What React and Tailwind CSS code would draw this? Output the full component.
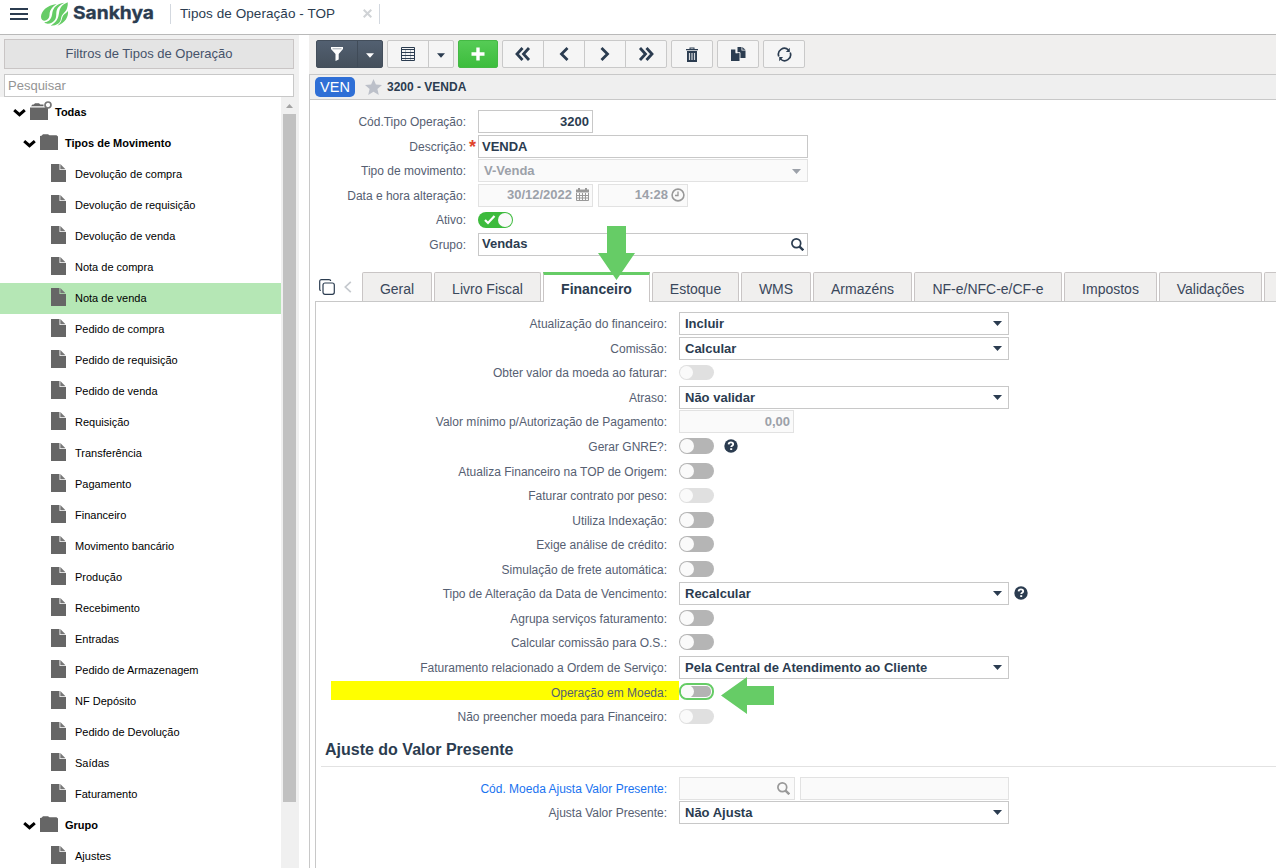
import React from 'react';

const movimentos = [
  'Devolução de compra',
  'Devolução de requisição',
  'Devolução de venda',
  'Nota de compra',
  'Nota de venda',
  'Pedido de compra',
  'Pedido de requisição',
  'Pedido de venda',
  'Requisição',
  'Transferência',
  'Pagamento',
  'Financeiro',
  'Movimento bancário',
  'Produção',
  'Recebimento',
  'Entradas',
  'Pedido de Armazenagem',
  'NF Depósito',
  'Pedido de Devolução',
  'Saídas',
  'Faturamento'
];

const tabs = [
  { nome: 'Geral', width: 'w-[70px]' },
  { nome: 'Livro Fiscal', width: 'w-[107px]' },
  { nome: 'Financeiro', width: 'w-[107px]', ativo: true },
  { nome: 'Estoque', width: 'w-[87px]' },
  { nome: 'WMS', width: 'w-[70px]' },
  { nome: 'Armazéns', width: 'w-[99px]' },
  { nome: 'NF-e/NFC-e/CF-e', width: 'w-[148px]' },
  { nome: 'Impostos', width: 'w-[93px]' },
  { nome: 'Validações', width: 'w-[103px]' },
  { nome: '', width: 'w-[60px]' }
];

const campos = [
  { label: 'Atualização do financeiro:', tipo: 'select', valor: 'Incluir' },
  { label: 'Comissão:', tipo: 'select', valor: 'Calcular' },
  { label: 'Obter valor da moeda ao faturar:', tipo: 'toggle', disabled: true },
  { label: 'Atraso:', tipo: 'select', valor: 'Não validar' },
  { label: 'Valor mínimo p/Autorização de Pagamento:', tipo: 'numero', valor: '0,00' },
  { label: 'Gerar GNRE?:', tipo: 'toggle', ajuda: true },
  { label: 'Atualiza Financeiro na TOP de Origem:', tipo: 'toggle' },
  { label: 'Faturar contrato por peso:', tipo: 'toggle', disabled: true },
  { label: 'Utiliza Indexação:', tipo: 'toggle' },
  { label: 'Exige análise de crédito:', tipo: 'toggle' },
  { label: 'Simulação de frete automática:', tipo: 'toggle' },
  { label: 'Tipo de Alteração da Data de Vencimento:', tipo: 'select', valor: 'Recalcular', ajuda: true },
  { label: 'Agrupa serviços faturamento:', tipo: 'toggle' },
  { label: 'Calcular comissão para O.S.:', tipo: 'toggle' },
  { label: 'Faturamento relacionado a Ordem de Serviço:', tipo: 'select', valor: 'Pela Central de Atendimento ao Cliente' },
  { label: 'Operação em Moeda:', tipo: 'toggle', foco: true },
  { label: 'Não preencher moeda para Financeiro:', tipo: 'toggle', disabled: true }
];

function Caret({ className = '' }) {
  return (
    <svg width="9" height="5" viewBox="0 0 9 5" className={className}>
      <path d="M0 0h9L4.5 5z" fill="currentColor" />
    </svg>
  );
}

function Lupa({ className = '' }) {
  return (
    <svg width="13" height="13" viewBox="0 0 13 13" fill="none" stroke="currentColor" className={className}>
      <circle cx="5.3" cy="5.3" r="4.4" strokeWidth="1.7" />
      <path d="M8.3 8.3l4 4" strokeWidth="2.4" />
    </svg>
  );
}

function Ajuda({ className = '' }) {
  return (
    <svg width="14" height="14" viewBox="0 0 14 14" className={className}>
      <circle cx="7" cy="7" r="6.7" fill="#2b3c50" />
      <path d="M4.6 5.4c.1-1.4 1.1-2 2.3-2 1.300 0 2.300.7 2.300 1.800 0 1.600-2 1.400-2 2.900" fill="none" stroke="#fff" strokeWidth="1.800" />
      <path d="M6.200 9.200h2v1.800h-2z" fill="#fff" />
    </svg>
  );
}

function Seta() {
  return (
    <svg width="13" height="8" viewBox="0 0 13 8" className="shrink-0">
      <path d="M1.200 1.200L6.500 5.700l5.300-4.500" fill="none" stroke="#000" strokeWidth="3" />
    </svg>
  );
}

function Pasta() {
  return (
    <svg width="18" height="16" viewBox="0 0 18 16" className="shrink-0">
      <path d="M0 2l1.500-.3L3 .3h5l1.500 1h7L18 2.600V16H0z" fill="#666" />
    </svg>
  );
}

function PastaRaiz() {
  return (
    <svg width="23" height="19" viewBox="0 0 23 19" className="shrink-0">
      <path d="M0 6.500h18V19H0zM1 5.300l1.500-1.700h1.300L5 2.200h4l1.300 1.400H13.500v1.700z" fill="#666" />
      <circle cx="18" cy="4" r="3" fill="#fff" stroke="#777" strokeWidth="1.700" />
    </svg>
  );
}

function Arquivo() {
  return (
    <svg width="15" height="18" viewBox="0 0 15 18" className="shrink-0">
      <path d="M0 0h8.500v6H15v12H0z" fill="#666" />
      <path d="M9.300 0v5.200H14.500z" fill="#777" />
    </svg>
  );
}

function Toggle({ disabled, foco, ligado }) {
  if (ligado) {
    return (
      <div className="relative mt-[2px] h-4 w-[35px] rounded-full bg-[#3dbb3d]">
        <svg width="12" height="10" viewBox="0 0 12 10" className="absolute left-[6px] top-[3px]">
          <path d="M1 5l3 3 6.500-7" fill="none" stroke="#fff" strokeWidth="2.200" />
        </svg>
        <div className="absolute right-[1px] top-[1px] h-[14px] w-[14px] rounded-full bg-[#fafafa]" />
      </div>
    );
  }
  if (foco) {
    return (
      <div className="mt-[2.6px] h-[17px] w-[35px] rounded-[8px] border-2 border-[#66cc66] bg-white p-px">
        <div className="relative h-[11px] w-[29px] rounded-[5px] bg-[#b3b3b3]">
          <div className="absolute -left-px -top-px h-[13px] w-[13px] rounded-full bg-[#fafafa]" />
        </div>
      </div>
    );
  }
  return (
    <div className={disabled ? 'mt-[3.6px] h-[15px] w-[35px] rounded-full bg-[#e0e0e0] p-px' : 'mt-[3px] h-[16px] w-[35px] rounded-full bg-[#b5b5b5] p-px'}>
      <div className={disabled ? 'h-[13px] w-[13px] rounded-full bg-[#fafafa]' : 'h-[14px] w-[14px] rounded-full bg-[#fafafa]'} />
    </div>
  );
}

function Select({ valor, disabled }) {
  return (
    <div
      className={
        disabled
          ? 'flex h-[23px] w-[330px] items-center justify-between border border-[#e2e2e2] bg-[#fafafa] pl-[5px] pr-[6px] text-[13px] font-bold text-[#9ca1a9]'
          : 'flex h-[23px] w-[330px] items-center justify-between border border-[#c8c8c8] bg-white pl-[5px] pr-[6px] text-[13px] font-bold text-[#2b3c50]'
      }
    >
      <span>{valor}</span>
      <Caret className={disabled ? 'mt-[2px]' : ''} />
    </div>
  );
}

function Linha({ label, labelWidth, children, destaque, link, obrigatorio }) {
  return (
    <div className="flex h-[24.56px] items-start">
      <div className={`${labelWidth} relative h-[23px] shrink-0 pr-3 text-right text-[12px] leading-[24px] ${link ? 'text-[#1a73f0]' : 'text-[#566072]'}`}>
        {destaque && <div className="absolute right-0 top-0 h-[19px] w-[348px] bg-[#ffff00]" />}
        <span className="relative">{label}</span>
        {obrigatorio && <span className="absolute right-[2px] top-0 text-[18px] font-bold text-[#e0442c]">*</span>}
      </div>
      {children}
    </div>
  );
}

function Cabecalho() {
  return (
    <header className="flex h-[35px] shrink-0 items-start border-b border-[#b9b9b9] bg-white">
      <div className="ml-[10px] mt-[8px] flex w-[18px] flex-col gap-[3px]">
        <div className="h-[2px] bg-[#2b3c50]" />
        <div className="h-[2px] bg-[#2b3c50]" />
        <div className="h-[2px] bg-[#2b3c50]" />
      </div>
      <svg width="120" height="28" viewBox="0 0 120 28" className="ml-[12px]">
        <g fill="#66cc66" transform="scale(.3333) translate(-120 0)">
          <path d="M170 12C140 15 123 35 123 50c0 12 12 16 20 8 9-8 3-18 9-28 5-10 11-13 18-18z" />
          <path d="M193 8c-23 4-33 14-36 30-2 17-7 26-24 29 7 9 27 3 33-9 6-13-1-23 9-36 5-7 11-10 18-14z" />
          <path d="M203 7c-16 7-22 15-25 27-3 16-2 28-26 43 20-1 28-7 31-21 2-14 12-18 17-28 3-8 4-14 3-21z" />
          <path d="M204 32c2 18-8 36-32 45 12-9 12-15 15-25 3-10 12-12 17-20z" />
        </g>
        <text x="33" y="19" textLength="81" lengthAdjust="spacingAndGlyphs" fontFamily="Inter, sans-serif" fontWeight="700" fontSize="18" fill="#2b3c50" stroke="#2b3c50" strokeWidth=".3">Sankhya</text>
      </svg>
      <div className="ml-[10px] mt-[4px] h-5 w-px bg-[#d3d8df]" />
      <span className="ml-[9px] mt-[4px] w-[183px] text-[13.5px] leading-[20px] tracking-[0.07px] text-[#2b3c50]">Tipos de Operação - TOP</span>
      <svg width="9" height="9" viewBox="0 0 9 9" className="mt-[9px]">
        <path d="M.7.700l7.600 7.600M8.300.700L.7 8.300" stroke="#d0d3d6" strokeWidth="2" />
      </svg>
      <div className="ml-[7px] mt-[4px] h-5 w-px bg-[#d3d8df]" />
    </header>
  );
}

function Sidebar() {
  return (
    <aside className="flex w-[299px] shrink-0 flex-col bg-[#f0f0f0]">
      <div className="px-1 pr-[5px] pt-[4px]">
        <div className="h-[30px] border border-[#c9c5c5] bg-[#e4e4e4] text-center text-[13px] leading-[28px] text-[#46536a]">
          Filtros de Tipos de Operação
        </div>
        <div className="mt-[5px] h-[23px] border border-[#c8c8c8] bg-white pl-[3px] text-[13px] leading-[21px] text-[#949494]">
          Pesquisar
        </div>
      </div>
      <div className="flex min-h-0 flex-1">
        <div className="w-[281px] shrink-0 overflow-hidden bg-white text-[11px] text-black">
          <div className="flex h-[31px] items-center pl-[13px] font-bold">
            <Seta />
            <div className="-mt-[5px] ml-1"><PastaRaiz /></div>
            <span className="ml-[2px]">Todas</span>
          </div>
          <div className="flex h-[31px] items-center pl-[23px] font-bold">
            <Seta />
            <div className="-mt-[4px] ml-1"><Pasta /></div>
            <span className="ml-[7px]">Tipos de Movimento</span>
          </div>
          {movimentos.map((m) => (
            <div
              key={m}
              className={`flex h-[31px] items-center pl-[51px] ${m === 'Nota de venda' ? 'bg-[#b5e7b5]' : ''}`}
            >
              <div className="-mt-[4px]"><Arquivo /></div>
              <span className="ml-[9px]">{m}</span>
            </div>
          ))}
          <div className="flex h-[31px] items-center pl-[23px] font-bold">
            <Seta />
            <div className="-mt-[4px] ml-1"><Pasta /></div>
            <span className="ml-[7px]">Grupo</span>
          </div>
          <div className="flex h-[31px] items-center pl-[51px]">
            <div className="-mt-[4px]"><Arquivo /></div>
            <span className="ml-[9px]">Ajustes</span>
          </div>
        </div>
        {/* barra de rolagem */}
        <div className="w-[18px] pl-[2px] pt-[7px]">
          <svg width="13" height="4" viewBox="0 0 13 4">
            <path d="M3 4h7L6.500 0z" fill="#a3a3a3" />
          </svg>
          <div className="mt-[6px] h-[688px] w-[13px] bg-[#c1c1c1]" />
        </div>
      </div>
    </aside>
  );
}

function Botao({ children, className = '' }) {
  return (
    <div className={`flex h-7 w-[42px] items-center justify-center rounded-[2px] border border-[#c9c9c9] bg-[#f5f5f5] ${className}`}>
      {children}
    </div>
  );
}

function Navegacao({ d, largura }) {
  return (
    <svg width={largura} height="14" viewBox={`0 0 ${largura} 14`}>
      <path d={d} fill="none" stroke="#2b3c50" strokeWidth="2.800" />
    </svg>
  );
}

function Toolbar() {
  return (
    <div className="flex h-[39px] shrink-0 gap-1 bg-[#f0efee] pl-[7px] pt-[5px] text-[#2b3c50]">
      <div className="flex h-7 w-[67px] rounded-[2px] border border-[#434e5b] bg-linear-to-b from-[#526071] to-[#45505c] text-white">
        <div className="flex w-[41px] items-center justify-center border-r border-[#404b58]">
          <svg width="12" height="14" viewBox="0 0 12 14">
            <path d="M0 0h12v2L7.700 7v5.500L4.500 14V7L0 2z" fill="#fff" />
            <path d="M1.500 1.800h9" stroke="#8a939d" strokeWidth=".8" />
          </svg>
        </div>
        <div className="flex flex-1 items-center justify-center pt-[3px]"><Caret className="w-2" /></div>
      </div>
      <div className="flex h-7 w-[67px] rounded-[2px] border border-[#c9c9c9] bg-[#f5f5f5]">
        <div className="flex w-[41px] items-center justify-center border-r border-[#c9c9c9]">
          <svg width="14" height="14" viewBox="0 0 14 14" fill="none">
            <path d="M4.500 3v10.500M9.500 3v10.500" stroke="#b4bbc2" />
            <path d="M.5.500h13v13H.5zM1 2.500h12M1 5.500h12M1 8.500h12M1 11.500h12" stroke="#2b3c50" />
          </svg>
        </div>
        <div className="flex flex-1 items-center justify-center pt-[3px]"><Caret className="w-2" /></div>
      </div>
      <div className="flex h-7 w-10 items-center justify-center rounded-[2px] border border-[#44b944] bg-linear-to-b from-[#55cb55] to-[#3cbd3c]">
        <svg width="14" height="14" viewBox="0 0 14 14">
          <path d="M7 .5v13M.5 7h13" stroke="#fff" strokeWidth="3.400" />
        </svg>
      </div>
      <div className="flex">
        <Botao className="rounded-r-none"><Navegacao largura={16} d="M7.500 1L2 7l5.500 6M14 1L8.500 7l5.500 6" /></Botao>
        <Botao className="-ml-px rounded-none"><Navegacao largura={12} d="M9.500 1L3.500 7l6 6" /></Botao>
        <Botao className="-ml-px rounded-none"><Navegacao largura={12} d="M2.500 1l6 6-6 6" /></Botao>
        <Botao className="-ml-px rounded-l-none"><Navegacao largura={16} d="M2 1l5.500 6L2 13M8.500 1L14 7l-5.500 6" /></Botao>
      </div>
      <Botao>
        <svg width="12" height="15" viewBox="0 0 12 15">
          <path d="M0 2h3.500V.500h5V2H12v1.200H0zM4.500 1.500V2h3v-.5z" fill="#2b3c50" fillRule="evenodd" />
          <path d="M1 4h10v11H1z" fill="#2b3c50" />
          <path d="M3.500 6v7M6 6v7M8.500 6v7" stroke="#d5d9dd" strokeWidth="1.200" />
        </svg>
      </Botao>
      <Botao>
        <svg width="15" height="14" viewBox="0 0 15 14">
          <path d="M6.500 0h4v3.500h4V11h-8z" fill="#2b3c50" />
          <path d="M11.300 0l3.200 2.800h-3.200z" fill="#2b3c50" />
          <path d="M0 2.500h4.500v3.700H8.500V14H0z" fill="#2b3c50" />
          <path d="M5.200 1.800v3.800H9v5.500" fill="none" stroke="#f5f5f5" strokeWidth=".9" />
        </svg>
      </Botao>
      <Botao>
        <svg width="15" height="15" viewBox="0 0 15 15" fill="none" stroke="#2b3c50" strokeWidth="1.700">
          <path d="M1.800 9.500A6 6 0 0 1 11.500 3M13.200 5.500A6 6 0 0 1 3.500 12" />
          <path d="M12.800.700v4.200H8.900zM2.200 14.300v-4.200h3.900z" fill="#2b3c50" stroke="none" />
        </svg>
      </Botao>
    </div>
  );
}

function Formulario() {
  return (
    <div className="relative pt-[10px]">
      <Linha label="Cód.Tipo Operação:" labelWidth="w-[168px]">
        <div className="h-[23px] w-[115px] border border-[#c8c8c8] pr-[3px] text-right text-[13px] font-bold leading-[21px] text-[#2b3c50]">3200</div>
      </Linha>
      <Linha label="Descrição:" labelWidth="w-[168px]" obrigatorio>
        <div className="h-[23px] w-[330px] border border-[#c8c8c8] pl-[3px] text-[13px] font-bold leading-[21px] text-[#2b3c50]">VENDA</div>
      </Linha>
      <Linha label="Tipo de movimento:" labelWidth="w-[168px]">
        <Select valor="V-Venda" disabled />
      </Linha>
      <Linha label="Data e hora alteração:" labelWidth="w-[168px]">
        <div className="flex h-[23px] w-[115px] items-center justify-end border border-[#e2e2e2] bg-[#fafafa] pr-[3px] text-[13px] font-bold text-[#9ca1a9]">
          30/12/2022
          <svg width="13" height="13" viewBox="0 0 13 13" className="mb-px ml-1">
            <path d="M0 1.500h13v3H0zM2 0h2v2H2zM9 0h2v2H9z" fill="#999" />
            <path d="M.5 5v7.500h12V5M.5 7.500h12M.5 10h12M3.500 5v7.500M6.500 5v7.500M9.500 5v7.500" fill="none" stroke="#999" />
          </svg>
        </div>
        <div className="ml-[5px] flex h-[23px] w-[90px] items-center justify-end border border-[#e2e2e2] bg-[#fafafa] pr-[2px] text-[13px] font-bold text-[#9ca1a9]">
          14:28
          <svg width="14" height="14" viewBox="0 0 14 14" fill="none" stroke="#999" className="ml-[3px]">
            <circle cx="7" cy="7" r="5.900" strokeWidth="1.600" />
            <path d="M7 3.500V7.500H4" strokeWidth="1.300" />
          </svg>
        </div>
      </Linha>
      <Linha label="Ativo:" labelWidth="w-[168px]">
        <div className="pt-[2px]"><Toggle ligado /></div>
      </Linha>
      <Linha label="Grupo:" labelWidth="w-[168px]">
        <div className="flex h-[23px] w-[330px] items-center justify-between border border-[#c8c8c8] pl-[3px] pr-[3px] text-[13px] font-bold text-[#2b3c50]">
          Vendas
          <Lupa />
        </div>
      </Linha>
      {/* seta verde apontando para a aba Financeiro */}
      <svg width="37" height="54" viewBox="0 0 37 54" className="absolute left-[288px] top-[126px] z-20">
        <path d="M9 0h19v27h9L18.500 54 0 27h9z" fill="#66cc66" />
      </svg>
    </div>
  );
}

function Abas() {
  return (
    <div className="mt-[14.64px] flex h-[29px] overflow-hidden">
      <div className="flex w-[52px] shrink-0 items-start pl-[9px] pt-[7px]">
        <svg width="16" height="16" viewBox="0 0 16 16" fill="none" stroke="#2b3c50">
          <rect x="4" y="4" width="11.300" height="11.300" rx="2" strokeWidth="1.200" />
          <path d="M1.800 11.500C1 11.500.7 11 .7 10V2.500C.7 1.300 1.300.700 2.500.700H10c1.200 0 1.700.4 1.700 1.300" strokeWidth="1.200" />
        </svg>
        <svg width="8" height="12" viewBox="0 0 8 12" className="ml-[9px] mt-[2px]">
          <path d="M6.800 .8L1.300 6l5.500 5.200" fill="none" stroke="#c5c9ce" strokeWidth="1.700" />
        </svg>
      </div>
      <div className="flex gap-[2px]">
        {tabs.map((t) => (
          <div
            key={t.nome}
            className={
              t.ativo
                ? `${t.width} shrink-0 border-x border-t-[3px] border-x-[#c9c5c5] border-t-[#66cc66] bg-white text-center text-[14px] font-bold leading-[28px] text-[#2b3c50]`
                : `${t.width} shrink-0 rounded-t-[2px] border border-b-0 border-[#c9c5c5] bg-[#f0efee] text-center text-[14px] leading-[32px] text-[#3a475b]`
            }
          >
            {t.nome}
          </div>
        ))}
      </div>
    </div>
  );
}

function Financeiro() {
  return (
    <div className="relative ml-[5px] flex-1 border-l border-[#c8c8c8]">
      {/* linha superior interrompida sob a aba ativa */}
      <div className="flex h-px">
        <div className="w-[228px] bg-[#c8c8c8]" />
        <div className="w-[105px]" />
        <div className="flex-1 bg-[#c8c8c8]" />
      </div>
      <div className="pt-[10.4px]">
        {campos.map((c) => (
          <Linha key={c.label} label={c.label} labelWidth="w-[363px]" destaque={c.foco}>
            {c.tipo === 'select' && <Select valor={c.valor} />}
            {c.tipo === 'numero' && (
              <div className="h-[23px] w-[115px] border border-[#e2e2e2] bg-[#fafafa] pr-[3px] text-right text-[13px] font-bold leading-[21px] text-[#9ca1a9]">{c.valor}</div>
            )}
            {c.tipo === 'toggle' && <Toggle disabled={c.disabled} foco={c.foco} />}
            {c.ajuda && <Ajuda className={c.tipo === 'select' ? 'ml-[5px] mt-[4px]' : 'ml-[10px] mt-[4px]'} />}
            {c.foco && (
              <svg width="53" height="37" viewBox="0 0 53 37" className="-mt-[4px] ml-[7px] shrink-0">
                <path d="M0 18.500L26 0v9h27v19H26v9z" fill="#66cc66" />
              </svg>
            )}
          </Linha>
        ))}
      </div>
      <div className="ml-[5px] mt-[10.1px] h-[27px] border-b border-[#e2e2e2] pl-1 text-[16px] font-bold leading-[20px] text-[#2b3c50]">
        Ajuste do Valor Presente
      </div>
      <div className="pt-[10.2px]">
        <Linha label="Cód. Moeda Ajusta Valor Presente:" labelWidth="w-[363px]" link>
          <div className="flex h-[23px] w-[116px] items-center justify-end border border-[#e2e2e2] bg-[#fafafa] pr-[4px] text-[#999]">
            <Lupa />
          </div>
          <div className="ml-[5px] h-[23px] w-[209px] border border-[#e2e2e2] bg-[#fafafa]" />
        </Linha>
        <Linha label="Ajusta Valor Presente:" labelWidth="w-[363px]">
          <Select valor="Não Ajusta" />
        </Linha>
      </div>
    </div>
  );
}

export default function App() {
  return (
    <div className="flex h-[868px] w-[1276px] flex-col overflow-hidden bg-white font-['Liberation_Sans',Arial,sans-serif]">
      <Cabecalho />
      <div className="flex min-h-0 flex-1">
        <Sidebar />
        <main className="ml-[10px] flex min-w-0 flex-1 flex-col">
          <Toolbar />
          <div className="flex min-h-0 flex-1 flex-col border-l border-t border-[#c8c8c8]">
            <div className="flex h-[25px] shrink-0 items-center border-b border-[#c8c8c8] bg-[#efefef] pl-[5px]">
              <div className="h-5 w-10 rounded-[5px] bg-[#2f6fd6] text-center text-[14.5px] leading-[21px] text-white">VEN</div>
              <svg width="17" height="16" viewBox="0 0 17 16" className="mb-px ml-[10px]">
                <path d="M8.500 0l2.400 5.600 6.100.5-4.600 4 1.400 5.900-5.300-3.200L3.200 16l1.400-5.900L0 6.100l6.100-.5z" fill="#bcc0c9" />
              </svg>
              <span className="ml-[5px] text-[12px] font-bold text-[#2b3c50]">3200 - VENDA</span>
            </div>
            <Formulario />
            <Abas />
            <Financeiro />
          </div>
        </main>
      </div>
    </div>
  );
}
